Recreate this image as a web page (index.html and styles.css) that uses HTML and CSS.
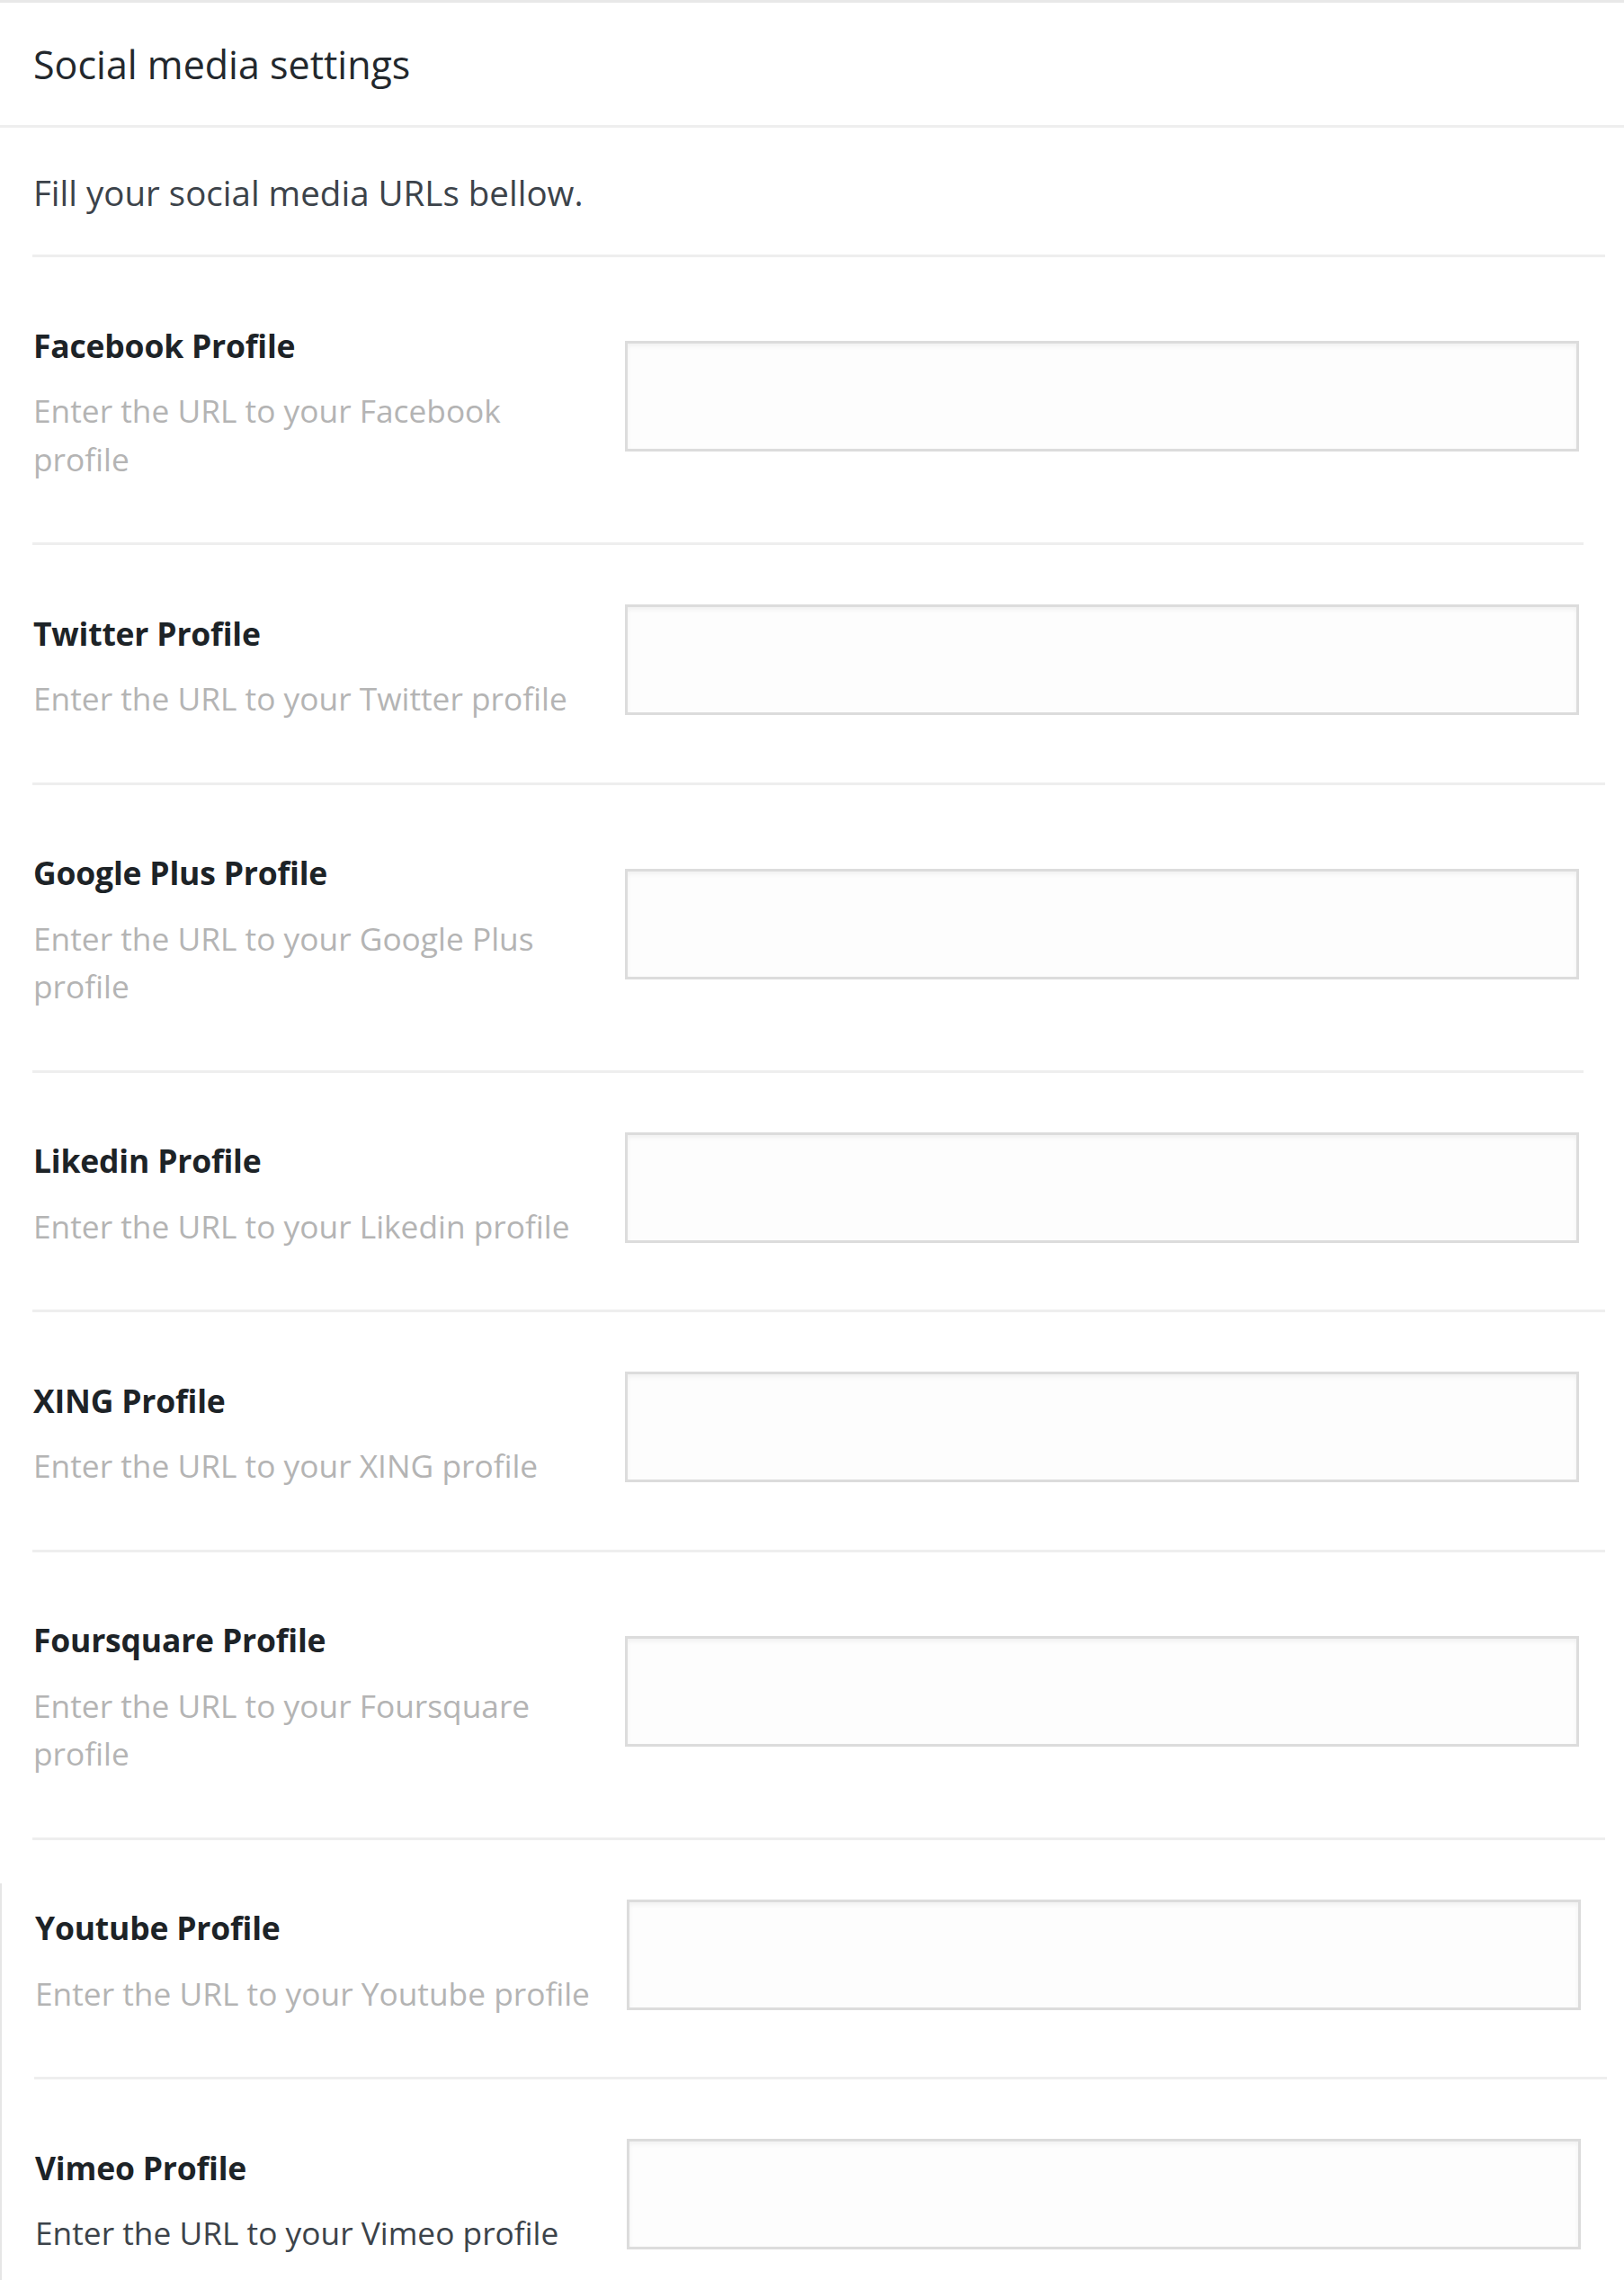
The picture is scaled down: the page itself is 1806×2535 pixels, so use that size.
FILE: index.html
```html
<!DOCTYPE html>
<html lang="en">
<head>
<meta charset="utf-8">
<title>Social media settings</title>
<link rel="stylesheet" href="styles.css">
</head>
<body>
<div class="panel">
  <div class="panel-head"><h2 class="panel-title">Social media settings</h2></div>
  <div class="panel-body">
    <p class="intro">Fill your social media URLs bellow.</p>
    <div class="row">
      <div class="field-info">
        <div class="field-label">Facebook Profile</div>
        <div class="field-desc">Enter the URL to your Facebook profile</div>
      </div>
      <div class="field-input"><input class="text-input" type="text"></div>
    </div>
    <div class="row row-ext">
      <div class="field-info">
        <div class="field-label">Twitter Profile</div>
        <div class="field-desc">Enter the URL to your Twitter profile</div>
      </div>
      <div class="field-input"><input class="text-input" type="text"></div>
    </div>
    <div class="row">
      <div class="field-info">
        <div class="field-label">Google Plus Profile</div>
        <div class="field-desc">Enter the URL to your Google Plus profile</div>
      </div>
      <div class="field-input"><input class="text-input" type="text"></div>
    </div>
    <div class="row row-ext">
      <div class="field-info">
        <div class="field-label">Likedin Profile</div>
        <div class="field-desc">Enter the URL to your Likedin profile</div>
      </div>
      <div class="field-input"><input class="text-input" type="text"></div>
    </div>
    <div class="row row-ext">
      <div class="field-info">
        <div class="field-label">XING Profile</div>
        <div class="field-desc">Enter the URL to your XING profile</div>
      </div>
      <div class="field-input"><input class="text-input" type="text"></div>
    </div>
    <div class="row row-ext">
      <div class="field-info">
        <div class="field-label">Foursquare Profile</div>
        <div class="field-desc">Enter the URL to your Foursquare profile</div>
      </div>
      <div class="field-input"><input class="text-input" type="text"></div>
    </div>
    <div class="row row-ext row-shift">
      <div class="field-info">
        <div class="field-label">Youtube Profile</div>
        <div class="field-desc">Enter the URL to your Youtube profile</div>
      </div>
      <div class="field-input"><input class="text-input" type="text"></div>
    </div>
    <div class="row row-last row-shift">
      <div class="field-info">
        <div class="field-label">Vimeo Profile</div>
        <div class="field-desc field-desc-dark">Enter the URL to your Vimeo profile</div>
      </div>
      <div class="field-input"><input class="text-input" type="text"></div>
    </div>
  </div>
</div>
</body>
</html>
```
FILE: styles.css
```css
html, body {
  margin: 0;
  padding: 0;
  background: #ffffff;
}
body {
  font-family: "Open Sans", "Noto Sans", "Liberation Sans", sans-serif;
  color: #23282d;
}
.panel {
  position: relative;
  width: 1806px;
  min-height: 2535px;
  background: #ffffff;
}
.panel::after {
  content: "";
  position: absolute;
  left: 0;
  top: 2094px;
  bottom: 0;
  width: 2px;
  background: #e6e6e6;
}
.panel-head {
  border-top: 3px solid #e8e8e8;
  border-bottom: 3px solid #eeeeee;
  padding: 40px 37px 38px;
}
.panel-title {
  margin: 0;
  font-size: 43px;
  line-height: 58px;
  font-weight: 500;
  color: #23282d;
}
.panel-body {
  padding: 0;
}
.intro {
  margin: 43px 21px 0 36px;
  padding: 0 0 39px 1px;
  border-bottom: 3px solid #eeeeee;
  font-size: 38.5px;
  line-height: 59px;
  color: #3c434a;
}
.row {
  display: grid;
  grid-template-columns: 658px 1061px 1fr;
  align-items: center;
  margin-left: 36px;
  width: 1725px;
  padding-left: 1px;
  box-sizing: border-box;
  border-bottom: 3px solid #eeeeee;
}
.row-ext {
  width: 1749px;
}
.row-shift {
  margin-left: 38px;
  padding-left: 1px;
}
.row-last {
  border-bottom: none;
}
.field-info {
  padding: 72.5px 32px 66px 0;
}
.field-label {
  font-size: 35.5px;
  line-height: 51.5px;
  font-weight: 700;
  color: #1d2327;
  letter-spacing: -0.2px;
}
.field-desc {
  margin-top: 20px;
  font-size: 35.3px;
  line-height: 53.5px;
  color: #b4b4b4;
}
.field-desc-dark {
  color: #3c434a;
}
.field-input {
  padding-bottom: 8px;
}
.text-input {
  display: block;
  width: 1061px;
  height: 123px;
  box-sizing: border-box;
  margin: 0;
  padding: 0 10px;
  border: 3px solid #dcdcdc;
  border-radius: 0;
  background: #fdfdfd;
  box-shadow: inset 0 3px 5px rgba(0, 0, 0, 0.05);
  font-family: inherit;
  font-size: 36px;
  outline: none;
}
```
